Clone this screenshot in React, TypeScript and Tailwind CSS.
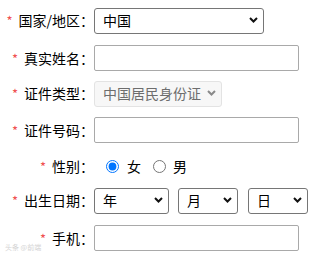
import React from 'react'

const font = { fontFamily: '"Noto Sans CJK SC", "Liberation Sans", sans-serif' }

function Label({ text }: { text: string }) {
  return (
    <div className="w-[94px] shrink-0 flex items-center justify-end text-[14px] text-black whitespace-nowrap">
      <span className="text-[#f05050] text-[13px] leading-none mr-[6px] mt-[1px]">*</span>
      <span>{text}</span>
    </div>
  )
}

function Chevron({ color = '#111' }: { color?: string }) {
  return (
    <svg width="9" height="6" viewBox="0 0 9 6" className="absolute right-[6px] top-1/2 -translate-y-1/2 pointer-events-none">
      <path d="M1 1l3.5 3.5L8 1" fill="none" stroke={color} strokeWidth="2" />
    </svg>
  )
}

function Select({ value, width, disabled }: { value: string; width: string; disabled?: boolean }) {
  return (
    <div className={`relative h-[26px] ${width}`}>
      <select
        disabled={disabled}
        defaultValue={value}
        className={
          disabled
            ? 'appearance-none w-full h-full border border-[#e3e3e3] bg-[#f7f7f7] text-[#6d6d6d] rounded-[3px] pl-[8px] text-[14px] outline-none'
            : 'appearance-none w-full h-full border border-[#767676] bg-white text-black rounded-[3px] pl-[8px] text-[14px] outline-none'
        }
      >
        <option>{value}</option>
      </select>
      <Chevron color={disabled ? '#8a8a8a' : '#111'} />
    </div>
  )
}

function TextInput() {
  return <input type="text" className="h-[26px] w-[205px] border border-[#a9a9a9] rounded-[2px] bg-white outline-none px-[4px] text-[14px]" />
}

export default function App() {
  return (
    <div className="relative w-[315px] h-[260px] bg-white overflow-hidden" style={font}>
      <div className="flex flex-col pt-[7px]">
        <div className="flex items-center h-[26px]">
          <Label text="国家/地区：" />
          <Select value="中国" width="w-[170px]" />
        </div>

        <div className="flex items-center h-[26px] mt-[12px]">
          <Label text="真实姓名：" />
          <TextInput />
        </div>

        <div className="flex items-center h-[26px] mt-[9px]">
          <Label text="证件类型：" />
          <Select value="中国居民身份证" width="w-[128px]" disabled />
        </div>

        <div className="flex items-center h-[26px] mt-[11px]">
          <Label text="证件号码：" />
          <TextInput />
        </div>

        <div className="flex items-center h-[26px] mt-[10px]">
          <Label text="性别：" />
          <div className="flex items-center pl-[12px] text-[14px]">
            <input type="radio" name="sex" defaultChecked className="m-0 w-[13px] h-[13px]" />
            <span className="ml-[8px]">女</span>
            <input type="radio" name="sex" className="m-0 ml-[12px] w-[13px] h-[13px]" />
            <span className="ml-[7px]">男</span>
          </div>
        </div>

        <div className="flex items-center h-[26px] mt-[8px]">
          <Label text="出生日期：" />
          <div className="flex items-center">
            <Select value="年" width="w-[75px]" />
            <div className="ml-[9px]">
              <Select value="月" width="w-[60px]" />
            </div>
            <div className="ml-[10px]">
              <Select value="日" width="w-[60px]" />
            </div>
          </div>
        </div>

        <div className="flex items-center h-[26px] mt-[12px]">
          <Label text="手机：" />
          <TextInput />
        </div>
      </div>

      <div className="absolute left-[5px] top-[244px] text-[7px] leading-none text-[#d4d4d4]">头条 @前端</div>
    </div>
  )
}
